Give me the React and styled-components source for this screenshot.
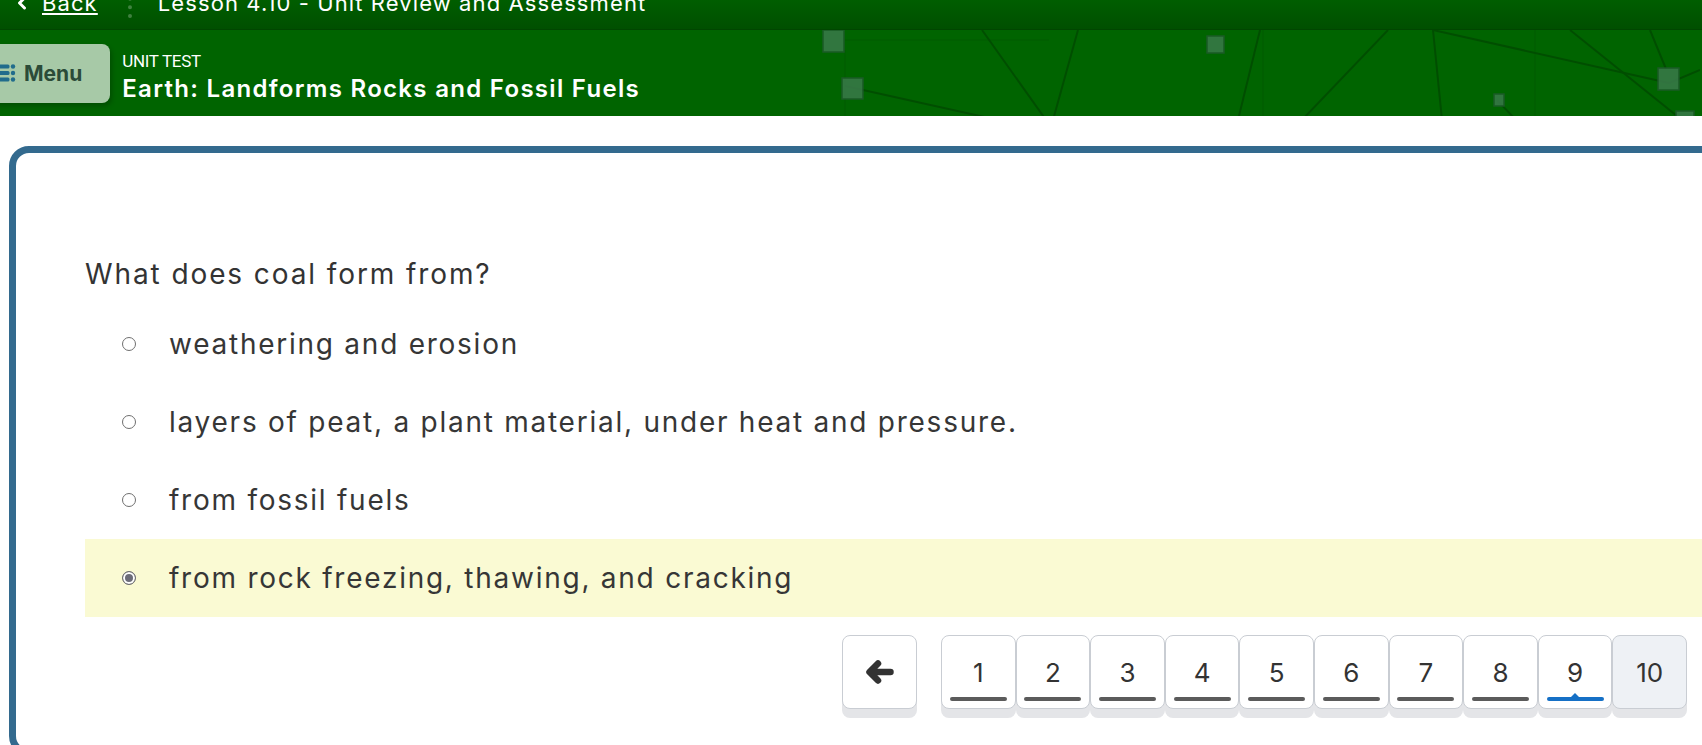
import React from 'react';
import styled, { createGlobalStyle } from 'styled-components';
import { ChevronLeft } from 'lucide-react';

const GlobalStyle = createGlobalStyle`
  html, body {
    margin: 0;
    padding: 0;
    background: #ffffff;
    overflow: hidden;
    font-family: "Inter", "Noto Sans", sans-serif;
  }
`;

const Page = styled.div`
  width: 1702px;
  height: 745px;
  overflow: hidden;
`;

const TopBar = styled.div`
  height: 30px;
  overflow: hidden;
  background: linear-gradient(#005e00, #004f00);
  border-bottom: 1px solid #004600;
  box-sizing: border-box;
`;

const TopInner = styled.div`
  display: flex;
  align-items: center;
  margin-top: -9px;
  height: 24px;
  padding-left: 12px;
  color: #ffffff;
  font-size: 22px;
  line-height: 24px;
  letter-spacing: 1.1px;
`;

const BackLink = styled.a`
  display: flex;
  align-items: center;
  gap: 10px;
  color: #ffffff;

  span {
    text-decoration: underline;
    text-underline-offset: 2px;
  }
`;

const Divider = styled.div`
  width: 0;
  height: 30px;
  margin: 0 26px 0 30px;
  border-left: 4px dotted rgba(255, 255, 255, 0.25);
`;

const LessonTitle = styled.div`
  white-space: nowrap;
`;

const Header = styled.header`
  display: flex;
  align-items: center;
  height: 86px;
  background: #006400;
`;

const MenuButton = styled.button`
  display: flex;
  align-items: center;
  gap: 8px;
  height: 59px;
  margin-left: -10px;
  padding: 0 28px 0 8px;
  border: none;
  border-radius: 8px;
  background: #a7c9a7;
  box-shadow: 2px 3px 4px rgba(0, 40, 0, 0.35);
  color: #2b4b38;
  font-family: "Inter", sans-serif;
  font-size: 21px;
  font-weight: 700;
`;

const TitleBlock = styled.div`
  display: flex;
  flex: 0 0 576px;
  flex-direction: column;
  gap: 2px;
  margin-left: 12px;
  margin-top: 8px;
  color: #ffffff;
  white-space: nowrap;
`;

const Kicker = styled.div`
  font-family: "Roboto", sans-serif;
  font-size: 17px;
  line-height: 22px;
  letter-spacing: -0.3px;
`;

const Title = styled.div`
  font-size: 24px;
  font-weight: 600;
  line-height: 30px;
  letter-spacing: 1.3px;
`;

const Pattern = styled.div`
  flex: 1;
  align-self: stretch;
  overflow: hidden;

  svg {
    display: block;
  }
`;

const Card = styled.main`
  box-sizing: border-box;
  width: 1741px;
  margin: 30px 0 0 9px;
  padding: 101px 0 40px 69px;
  border: 7px solid #336a8e;
  border-radius: 20px;
`;

const Question = styled.div`
  margin-bottom: 11px;
  color: #333333;
  font-size: 28px;
  line-height: 40px;
  letter-spacing: 1.9px;
`;

const Option = styled.label`
  display: flex;
  align-items: center;
  gap: 33px;
  height: 78px;
  padding-left: 37px;
  background: ${(p) => (p.$selected ? '#fafad3' : 'transparent')};
  color: #363636;
  font-size: 28px;
  letter-spacing: 1.75px;
`;

const Radio = styled.span`
  flex: none;
  box-sizing: border-box;
  width: 14px;
  height: 14px;
  border-radius: 50%;
  border: 1px solid #6f6f6f;
  background: ${(p) => (p.$checked ? '#6c6c78' : '#ffffff')};
  box-shadow: ${(p) => (p.$checked ? 'inset 0 0 0 2px #ffffff' : 'none')};
`;

const Pager = styled.nav`
  display: flex;
  justify-content: flex-end;
  margin-top: 18px;
  padding-right: 56px;
`;

const PageButton = styled.button`
  display: flex;
  flex-direction: column;
  align-items: center;
  box-sizing: border-box;
  width: ${(p) => (p.$wide ? '75px' : '74.6px')};
  height: 74px;
  padding: 0;
  border: 1px solid #c9cdd3;
  border-radius: 8px;
  background: ${(p) => (p.$current ? '#eef1f5' : '#ffffff')};
  box-shadow: 0 9px 0 #e4e5e8;
  color: #333333;
  font-family: "Inter", sans-serif;
`;

const ArrowButton = styled(PageButton)`
  justify-content: center;
  margin-right: 24px;
`;

const Num = styled.span`
  margin-top: 22px;
  font-size: 26px;
  line-height: 30px;
`;

const Bar = styled.span`
  position: relative;
  width: 57px;
  height: 4px;
  margin-top: 9px;
  border-radius: 2px;
  background: ${(p) => (p.$state === 'active' ? '#1570c6' : p.$state === 'none' ? 'transparent' : '#5b5b5b')};

  &::before {
    content: '';
    display: ${(p) => (p.$state === 'active' ? 'block' : 'none')};
    position: absolute;
    left: 50%;
    top: -4px;
    margin-left: -5px;
    border-left: 5px solid transparent;
    border-right: 5px solid transparent;
    border-bottom: 5px solid #1570c6;
  }
`;

const MenuIcon = () => (
  <svg width="18" height="22" viewBox="0 0 18 22" fill="#216c8c">
    <rect x="-4" y="2.5" width="15.5" height="4" rx="1.5" />
    <rect x="-4" y="9" width="15.5" height="4" rx="1.5" />
    <rect x="-4" y="15.5" width="15.5" height="4" rx="1.5" />
    <circle cx="15" cy="4.5" r="2.2" />
    <circle cx="15" cy="11" r="2.2" />
    <circle cx="15" cy="17.5" r="2.2" />
  </svg>
);

const ArrowIcon = () => (
  <svg width="30" height="26" viewBox="0 0 30 26" fill="none" stroke="#333333" strokeWidth="6.5" strokeLinecap="round" strokeLinejoin="round">
    <path d="M13 4.5 L4.5 13 L13 21.5 M6 13 H25.5" />
  </svg>
);

const lines = [
  [284, 0, 348, 90],
  [380, 0, 355, 90],
  [562, 0, 540, 90],
  [690, 0, 604, 90],
  [735, 0, 744, 90],
  [735, 0, 971, 53],
  [872, 0, 984, 90],
  [952, 0, 968, 39],
  [147, 56, 300, 90],
  [799, 70, 818, 90],
  [971, 53, 1002, 40],
];

const faint = [
  [147, 10, 351, 10],
  [565, 0, 565, 90],
  [837, 0, 837, 90],
  [147, 20, 147, 90],
];

const squares = [
  [125, 0, 21, 22],
  [144, 48, 21, 21],
  [509, 6, 17, 17],
  [796, 64, 10, 12],
  [960, 38, 21, 22],
  [978, 81, 18, 10],
];

const HeaderPattern = () => (
  <svg width="1002" height="86" viewBox="0 0 1002 86">
    {faint.map(([x1, y1, x2, y2], i) => (
      <line key={'f' + i} x1={x1} y1={y1} x2={x2} y2={y2} stroke="#005a00" strokeWidth="1" />
    ))}
    {lines.map(([x1, y1, x2, y2], i) => (
      <line key={'l' + i} x1={x1} y1={y1} x2={x2} y2={y2} stroke="#004e00" strokeWidth="2" />
    ))}
    {squares.map(([x, y, w, h], i) => (
      <rect key={'s' + i} x={x} y={y} width={w} height={h} fill="#3a7a4a" stroke="#1f5a2c" strokeWidth="1.5" opacity="0.85" />
    ))}
  </svg>
);

const options = [
  'weathering and erosion',
  'layers of peat, a plant material, under heat and pressure.',
  'from fossil fuels',
  'from rock freezing, thawing, and cracking',
];

const App = () => {
  const selected = 3;
  const answered = [1, 2, 3, 4, 5, 6, 7, 8, 9];

  return (
    <Page>
      <GlobalStyle />
      <TopBar>
        <TopInner>
          <BackLink>
            <ChevronLeft size={20} strokeWidth={3.5} />
            <span>Back</span>
          </BackLink>
          <Divider />
          <LessonTitle>Lesson 4.10 - Unit Review and Assessment</LessonTitle>
        </TopInner>
      </TopBar>
      <Header>
        <MenuButton>
          <MenuIcon />
          Menu
        </MenuButton>
        <TitleBlock>
          <Kicker>UNIT TEST</Kicker>
          <Title>Earth: Landforms Rocks and Fossil Fuels</Title>
        </TitleBlock>
        <Pattern>
          <HeaderPattern />
        </Pattern>
      </Header>
      <Card>
        <Question>What does coal form from?</Question>
        {options.map((text, i) => (
          <Option key={text} $selected={i === selected}>
            <Radio $checked={i === selected} />
            {text}
          </Option>
        ))}
        <Pager>
          <ArrowButton $wide>
            <ArrowIcon />
          </ArrowButton>
          {Array.from({ length: 10 }, (_, i) => i + 1).map((n) => (
            <PageButton key={n} $current={n === 10}>
              <Num>{n}</Num>
              <Bar $state={n === 9 ? 'active' : answered.includes(n) ? 'done' : 'none'} />
            </PageButton>
          ))}
        </Pager>
      </Card>
    </Page>
  );
};

export default App;
